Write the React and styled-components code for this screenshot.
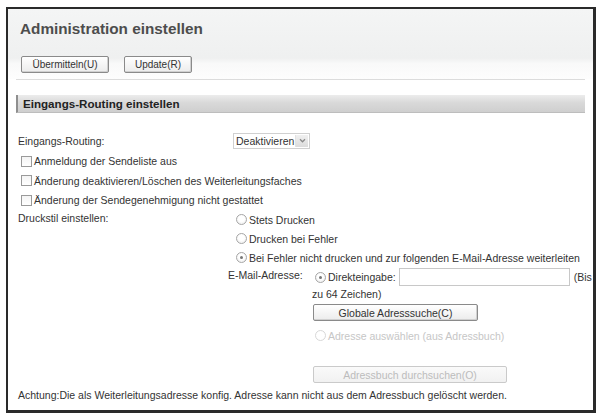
import React from "react";
import styled, { createGlobalStyle } from "styled-components";

const GlobalStyle = createGlobalStyle`
  html, body {
    margin: 0;
    padding: 0;
    background: #fff;
  }
  body {
    font-family: "Liberation Sans", Arial, sans-serif;
    font-size: 10.5px;
    color: #333;
  }
`;

const Frame = styled.div`
  box-sizing: border-box;
  margin: 7px 0 0 6px;
  width: 590px;
  height: 406px;
  border: 2px solid #2a2a2a;
  border-right-width: 3px;
  border-bottom-width: 3px;
  overflow: hidden;
`;

const Header = styled.div`
  height: 70px;
  padding: 0 8px;
  background: linear-gradient(
    to bottom,
    #f4f5f5 0%,
    #eff0f0 70%,
    #f9f9f9 78%,
    #fdfdfd 100%
  );
`;

const HeaderInner = styled.div`
  height: 70px;
  border-bottom: 1px solid #dcdcdc;
  display: flex;
  flex-direction: column;
  padding-left: 4px;
`;

const Title = styled.h1`
  margin: 11px 0 0 0;
  font-size: 15.3px;
  font-weight: bold;
  color: #4d4d4d;
  line-height: 18px;
`;

const Toolbar = styled.div`
  display: flex;
  gap: 15px;
  margin-top: 18px;
  padding-left: 1px;
`;

const Button = styled.button`
  box-sizing: border-box;
  height: 17px;
  width: ${(p) => p.$w}px;
  margin-top: ${(p) => p.$mt || 0}px;
  padding: 0;
  font-family: "Liberation Sans", Arial, sans-serif;
  font-size: ${(p) => p.$fs || 10}px;
  color: ${(p) => (p.disabled ? "#bcbcbc" : "#333")};
  border: 1px solid ${(p) => (p.disabled ? "#cacaca" : "#8a8a8a")};
  border-radius: 2px;
  background: ${(p) =>
    p.disabled
      ? "linear-gradient(#fafafa, #f1f1f1)"
      : "linear-gradient(#ffffff, #ececec)"};
  box-shadow: ${(p) => (p.disabled ? "none" : "inset -1px -1px 0 #d0d0d0")};
`;

const Body = styled.div`
  padding: 16px 8px 0 8px;
`;

const SectionBar = styled.div`
  box-sizing: border-box;
  height: 18px;
  display: flex;
  align-items: center;
  padding-left: 5px;
  font-size: 11.6px;
  font-weight: bold;
  color: #222;
  border-left: 2px solid #8f8f8f;
  border-bottom: 1px solid #bdbdbd;
  background: linear-gradient(to bottom, #ececec 0%, #d9d9d9 45%, #cfcfcf 100%);
`;

const Form = styled.div`
  padding: 17px 0 0 2px;
  display: flex;
  flex-direction: column;
`;

const Row = styled.div`
  display: flex;
  align-items: center;
  height: ${(p) => p.$h || 19}px;
  flex-shrink: 0;
`;

const TopRow = styled.div`
  display: flex;
  align-items: flex-start;
`;

const Label = styled.div`
  width: 214px;
  flex-shrink: 0;
  line-height: 14px;
  padding-top: ${(p) => p.$pt || 0}px;
`;

const Value = styled.div`
  display: flex;
  flex-direction: column;
  padding-left: ${(p) => p.$pl || 0}px;
`;

const Check = styled.label`
  display: flex;
  align-items: center;
  gap: 2px;
  padding-left: 3px;
`;

const Box = styled.span`
  box-sizing: border-box;
  width: 11px;
  height: 11px;
  border: 1px solid #9a9a9a;
  background: linear-gradient(#f4f4f4, #ffffff);
`;

const RadioLine = styled.label`
  display: flex;
  align-items: center;
  gap: 2px;
  height: 19px;
  white-space: nowrap;
  margin-left: ${(p) => p.$ml ?? 4}px;
  margin-top: ${(p) => p.$mt || 0}px;
  color: ${(p) => (p.$disabled ? "#c6c6c6" : "#333")};
`;

const Circle = styled.span`
  box-sizing: border-box;
  width: 11px;
  height: 11px;
  border-radius: 50%;
  border: 1px solid ${(p) => (p.$disabled ? "#d8d8d8" : "#a6a6a6")};
  background: ${(p) =>
    p.$disabled ? "#fff" : "radial-gradient(circle at 50% 40%, #fff 40%, #e6e6e6 100%)"};
  display: flex;
  align-items: center;
  justify-content: center;
  &::after {
    content: "";
    display: ${(p) => (p.$on ? "block" : "none")};
    width: 3px;
    height: 3px;
    border-radius: 50%;
    background: #777;
  }
`;

const Select = styled.div`
  box-sizing: border-box;
  width: 77px;
  height: 16px;
  margin-left: 1px;
  display: flex;
  align-items: center;
  justify-content: space-between;
  border: 1px solid #d0d0d0;
  padding-left: 2px;
`;

const Arrow = styled.span`
  width: 12px;
  height: 12px;
  background: linear-gradient(#f0f0f0, #dcdcdc);
  border-left: 1px solid #e2e2e2;
  display: flex;
  align-items: center;
  justify-content: center;
  margin-right: 1px;
`;

const EmailGrid = styled.div`
  display: flex;
  margin-left: -4px;
`;

const EmailLabel = styled.div`
  width: 84px;
  flex-shrink: 0;
  padding-top: 1px;
  line-height: 14px;
  white-space: nowrap;
`;

const EmailBox = styled.div`
  display: flex;
  flex-direction: column;
  width: 280px;
`;

const InputLine = styled.div`
  display: flex;
  align-items: center;
  height: 20px;
  white-space: nowrap;
`;

const TextInput = styled.input`
  box-sizing: border-box;
  width: 171px;
  height: 18px;
  border: 1px solid #c8c8c8;
  margin: 0 4px 0 3px;
`;

const Note = styled.div`
  line-height: 14px;
  white-space: nowrap;
`;

const Warning = styled.div`
  line-height: 14px;
  margin-top: 5px;
  white-space: nowrap;
`;

function Radio({ on, disabled, ml, mt, children }) {
  return (
    <RadioLine $disabled={disabled} $ml={ml} $mt={mt}>
      <Circle $on={on} $disabled={disabled} />
      {children}
    </RadioLine>
  );
}

export default function App() {
  return (
    <>
      <GlobalStyle />
      <Frame>
        <Header>
          <HeaderInner>
            <Title>Administration einstellen</Title>
            <Toolbar>
              <Button $w={88}>Übermitteln(U)</Button>
              <Button $w={68}>Update(R)</Button>
            </Toolbar>
          </HeaderInner>
        </Header>
        <Body>
          <SectionBar>Eingangs-Routing einstellen</SectionBar>
          <Form>
            <Row $h={21}>
              <Label>Eingangs-Routing:</Label>
              <Select>
                Deaktivieren
                <Arrow>
                  <svg width="7" height="5" viewBox="0 0 8 6">
                    <path d="M1 1.5 L4 4.5 L7 1.5" fill="none" stroke="#8a8a8a" strokeWidth="1.5" />
                  </svg>
                </Arrow>
              </Select>
            </Row>
            <Row $h={20}>
              <Check>
                <Box />
                Anmeldung der Sendeliste aus
              </Check>
            </Row>
            <Row $h={19}>
              <Check>
                <Box />
                Änderung deaktivieren/Löschen des Weiterleitungsfaches
              </Check>
            </Row>
            <Row $h={20}>
              <Check>
                <Box />
                Änderung der Sendegenehmigung nicht gestattet
              </Check>
            </Row>
            <TopRow>
              <Label $pt={1}>Druckstil einstellen:</Label>
              <Value>
                <Radio>Stets Drucken</Radio>
                <Radio>Drucken bei Fehler</Radio>
                <Radio on>
                  Bei Fehler nicht drucken und zur folgenden E-Mail-Adresse weiterleiten
                </Radio>
                <EmailGrid>
                  <EmailLabel>E-Mail-Adresse:</EmailLabel>
                  <EmailBox>
                    <InputLine>
                      <Radio on ml={3}>Direkteingabe:</Radio>
                      <TextInput />
                      (Bis
                    </InputLine>
                    <Note>zu 64 Zeichen)</Note>
                  </EmailBox>
                </EmailGrid>
                <Value $pl={81}>
                  <Button $w={165} $mt={3} $fs={10.5}>
                    Globale Adresssuche(C)
                  </Button>
                  <Radio disabled ml={2} mt={5}>
                    Adresse auswählen (aus Adressbuch)
                  </Radio>
                  <Button $w={194} $mt={21} $fs={10.5} disabled>
                    Adressbuch durchsuchen(O)
                  </Button>
                </Value>
              </Value>
            </TopRow>
            <Warning>
              Achtung:Die als Weiterleitungsadresse konfig. Adresse kann nicht aus dem Adressbuch gelöscht werden.
            </Warning>
          </Form>
        </Body>
      </Frame>
    </>
  );
}
